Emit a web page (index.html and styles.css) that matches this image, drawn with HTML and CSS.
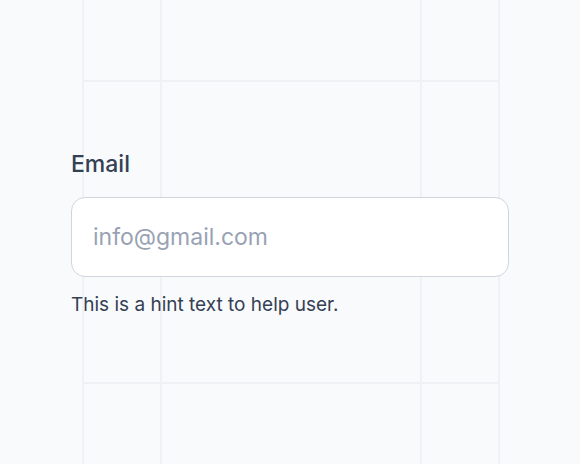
FILE: index.html
```html
<!DOCTYPE html>
<html>
<head>
<meta charset="utf-8">
<link rel="stylesheet" href="styles.css">
</head>
<body>
<main class="page">
  <div class="field">
    <label class="label" for="email">Email</label>
    <input class="input" id="email" type="email" placeholder="info@gmail.com">
    <p class="hint">This is a hint text to help user.</p>
  </div>
</main>
</body>
</html>
```

FILE: styles.css
```css
html, body {
  margin: 0;
  padding: 0;
}
body {
  width: 580px;
  height: 464px;
  overflow: hidden;
  background-color: #f9fafb;
  background-image:
    linear-gradient(#eff1f4, #eff1f4),
    linear-gradient(#eff1f4, #eff1f4),
    linear-gradient(#eff1f4, #eff1f4),
    linear-gradient(#eff1f4, #eff1f4),
    linear-gradient(#eff1f4, #eff1f4),
    linear-gradient(#eff1f4, #eff1f4);
  background-repeat: no-repeat;
  background-position:
    82px 0, 160px 0, 420px 0, 498px 0,
    82px 80px, 82px 382px;
  background-size:
    2px 100%, 2px 100%, 2px 100%, 2px 100%,
    418px 2px, 418px 2px;
  font-family: Inter, "Noto Sans", sans-serif;
}
.page {
  padding: 149px 0 0 71px;
}
.field {
  width: 438px;
  display: flex;
  flex-direction: column;
}
.label {
  font-size: 23px;
  line-height: 30px;
  font-weight: 500;
  color: #344054;
  margin-bottom: 18px;
}
.input {
  box-sizing: border-box;
  height: 80px;
  width: 100%;
  border: 1px solid #d0d5dd;
  border-radius: 14px;
  background: #ffffff;
  padding: 0 21px;
  font-family: inherit;
  font-size: 23px;
  color: #101828;
  outline: none;
}
.input::placeholder {
  color: #98a2b3;
}
.hint {
  margin: 15px 0 0;
  font-size: 19px;
  line-height: 26px;
  color: #344054;
}
```
